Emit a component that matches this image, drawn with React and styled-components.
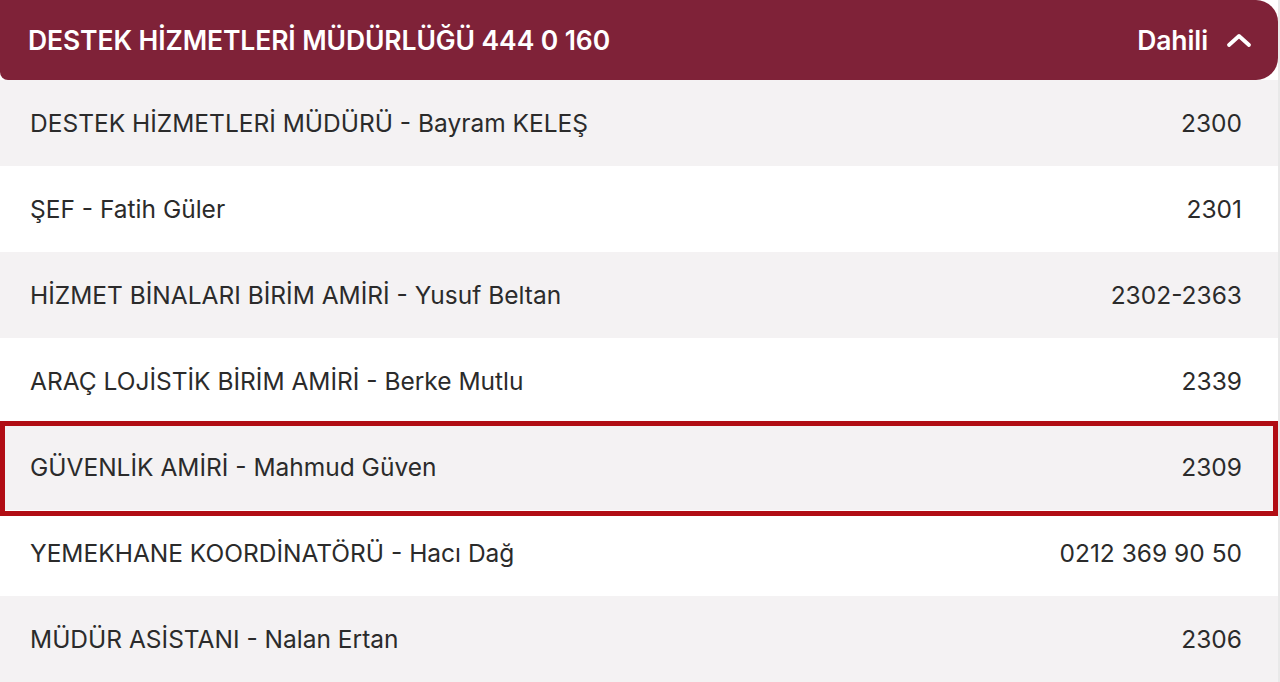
import React from "react";
import styled, { createGlobalStyle } from "styled-components";

const Global = createGlobalStyle`
  html, body { margin: 0; padding: 0; background: #e9e9e9; }
  body { font-family: Inter, "Noto Sans", sans-serif; overflow: hidden; }
`;

const Panel = styled.div`
  width: 1278px;
  height: 682px;
  background: #ffffff;
  display: flex;
  flex-direction: column;
`;

const Header = styled.div`
  height: 80px;
  flex: none;
  background: #7f2238;
  color: #ffffff;
  display: flex;
  align-items: center;
  justify-content: space-between;
  padding: 0 26px 0 28px;
  border-radius: 0 22px 22px 8px;
  font-size: 26.5px;
  font-weight: 600;
  letter-spacing: -0.1px;
`;

const HeaderRight = styled.div`
  display: flex;
  align-items: center;
  gap: 18px;
`;

const Row = styled.div`
  position: relative;
  height: 86px;
  flex: none;
  box-sizing: border-box;
  display: flex;
  align-items: center;
  justify-content: space-between;
  padding: 0 36px 0 30px;
  background: ${(p) => (p.$alt ? "#f4f2f3" : "#ffffff")};
  color: #2b2b2b;
  font-size: 24.5px;
  font-weight: 400;
`;

const Highlight = styled.div`
  position: absolute;
  z-index: 2;
  top: -3px;
  bottom: -6px;
  left: 0;
  right: 0;
  border: 5px solid #b10d14;
  pointer-events: none;
`;

const Name = styled.span``;
const Ext = styled.span``;

const Chevron = () => (
  <svg width="26" height="16" viewBox="0 0 26 16" fill="none">
    <path d="M3 13 L13 4 L23 13" stroke="#fff" strokeWidth="3.8" strokeLinecap="round" strokeLinejoin="round" />
  </svg>
);

const rows = [
  ["DESTEK HİZMETLERİ MÜDÜRÜ - Bayram KELEŞ", "2300"],
  ["ŞEF - Fatih Güler", "2301"],
  ["HİZMET BİNALARI BİRİM AMİRİ - Yusuf Beltan", "2302-2363"],
  ["ARAÇ LOJİSTİK BİRİM AMİRİ - Berke Mutlu", "2339"],
  ["GÜVENLİK AMİRİ - Mahmud Güven", "2309"],
  ["YEMEKHANE KOORDİNATÖRÜ - Hacı Dağ", "0212 369 90 50"],
  ["MÜDÜR ASİSTANI - Nalan Ertan", "2306"],
];

export default function App() {
  return (
    <>
      <Global />
      <Panel>
        <Header>
          <span>DESTEK HİZMETLERİ MÜDÜRLÜĞÜ 444 0 160</span>
          <HeaderRight>
            <span>Dahili</span>
            <Chevron />
          </HeaderRight>
        </Header>
        {rows.map(([n, e], i) => (
          <Row key={i} $alt={i % 2 === 0}>
            <Name>{n}</Name>
            <Ext>{e}</Ext>
            {i === 4 && <Highlight />}
          </Row>
        ))}
      </Panel>
    </>
  );
}
